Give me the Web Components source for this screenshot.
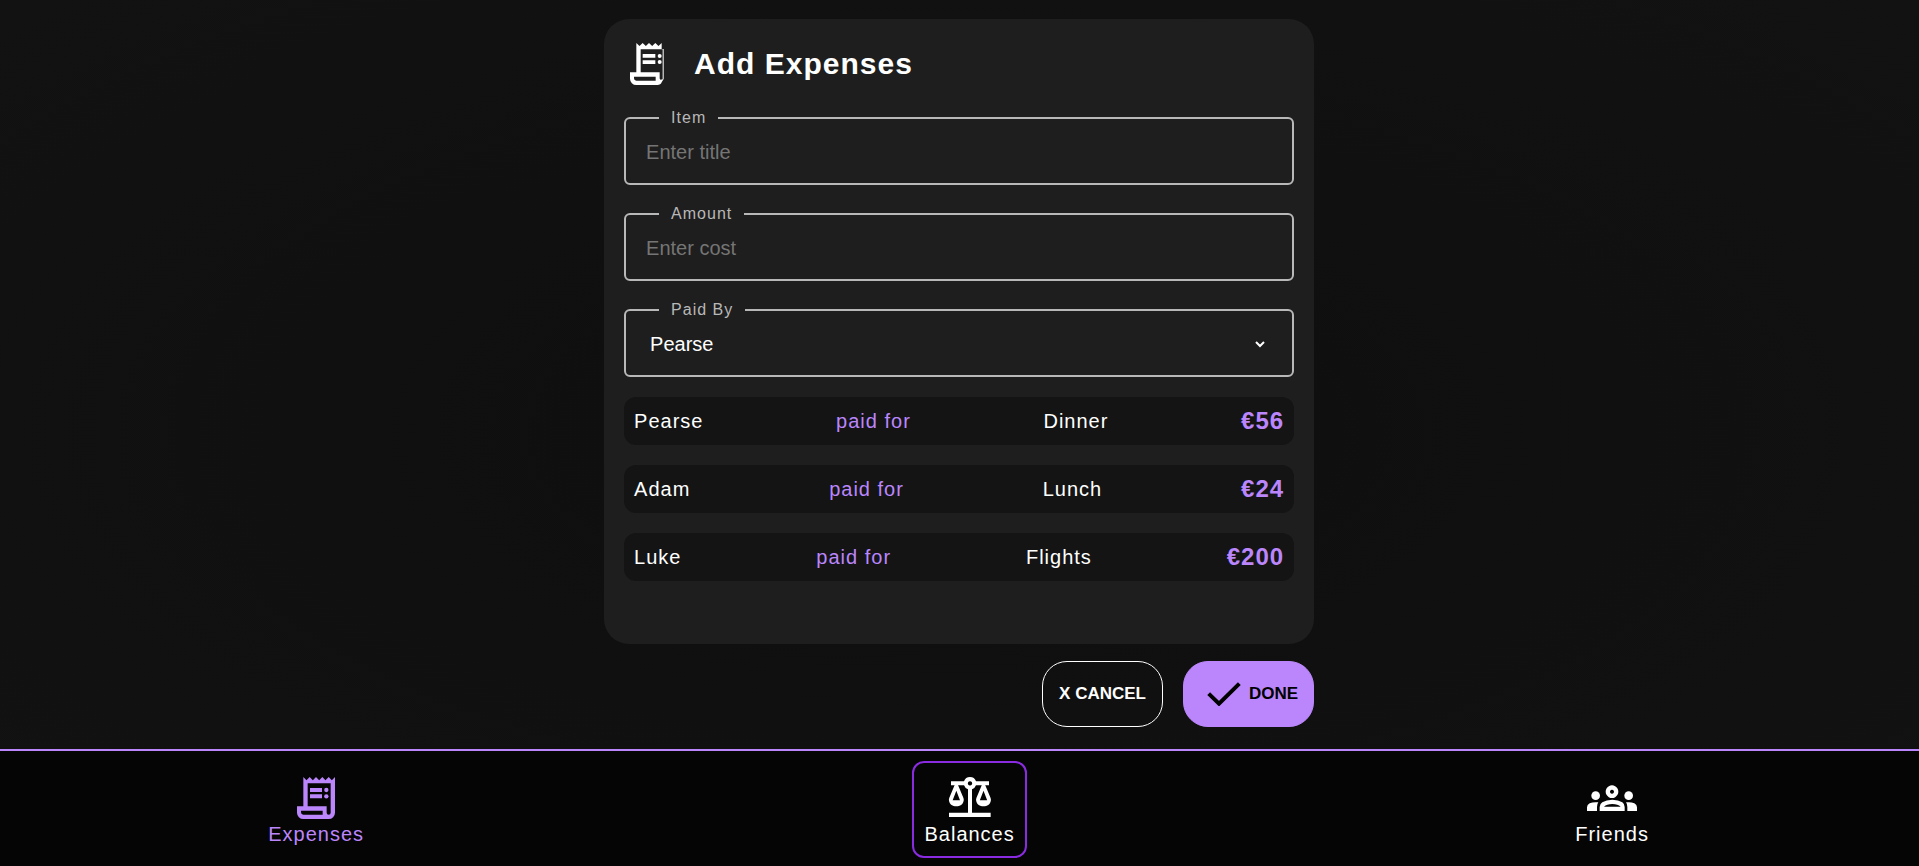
<!DOCTYPE html>
<html lang="en">
<head>
<meta charset="utf-8">
<meta name="viewport" content="width=device-width, initial-scale=1">
<title>Add Expenses</title>
<style>
  body {
    margin: 0;
    background: radial-gradient(ellipse at center, #0f0f0f 20%, #121212);
    color: #fff;
    font: 20px/23px "Liberation Sans", Arial, sans-serif;
    letter-spacing: 1px;
    --accent: #bb86fc;
    --surface: #1e1e1e;
    --row: #141414;
    --line: #b8b8b8;
  }
</style>
</head>
<body>
<expense-app></expense-app>

<script>
const define = (name, html, setup) => customElements.define(name, class extends HTMLElement {
  constructor() {
    super();
    const t = document.createElement('template');
    t.innerHTML = html;
    this.attachShadow({ mode: 'open' }).append(t.content.cloneNode(true));
  }
  connectedCallback() { if (setup) setup(this, this.shadowRoot); }
});

const icons = {
  receipt: `<svg viewBox="0 0 150 150" fill="currentColor"><g transform="translate(18 12)"><path fill-rule="evenodd" d="M19 0l9.5 9.5L38 0l9.5 9.5L57 0l9.5 9.5L76 0l9.5 9.5L95 0l9.5 9.5L114 0V107a19 19 0 0 1-19 19H19a19 19 0 0 1-19-19V88H19ZM32 19H101V107a6 6 0 0 1-12 0V88H32ZM12 101H77V113H19a7 7 0 0 1-7-7Z"/><path d="M39 33h36v12H39zM39 52h36v12H39z"/><circle cx="88" cy="39" r="6.5"/><circle cx="88" cy="58" r="6.5"/></g></svg>`,
  balance: `<svg viewBox="0 0 150 150" fill="currentColor"><path fill-rule="evenodd" d="M18 25H57a19 19 0 0 1 36 0H132V37H93a19 19 0 0 1-12 12V119H137V132H12V119H69V49A19 19 0 0 1 57 37H18ZM75 24.500a6.500 6.500 0 1 0 .01 0Z"/><path fill-rule="evenodd" d="M29 36H39L55 74Q57 79 56 83C54 94 45 100 34 100S14 94 12 83Q11 79 13 74ZM34 53L23 82H45Z"/><path transform="translate(81.500 0)" fill-rule="evenodd" d="M29 36H39L55 74Q57 79 56 83C54 94 45 100 34 100S14 94 12 83Q11 79 13 74ZM34 53L23 82H45Z"/></svg>`,
  friends: `<svg viewBox="0 0 150 150" fill="currentColor"><path fill-rule="evenodd" d="M75 37a19 19 0 1 0 .01 0ZM75 50a6 6 0 1 1-.01 0Z"/><circle cx="26" cy="68" r="13"/><circle cx="125" cy="68" r="13"/><path fill-rule="evenodd" d="M38 114V102Q38 93 46 88Q58 80 76 80T106 88Q113 93 113 102V114ZM51 101H101Q93 93 76 93T51 101Z"/><path d="M0 114V103Q0 95 8 91Q19 86 34 88Q30 93 30 102V114ZM150 114V103Q150 95 142 91Q132 86 117 88Q121 93 121 102V114Z"/></svg>`
};

define('app-heading', `
  <style>
    :host { display: flex; align-items: center; gap: 30px; }
    svg { display: block; width: 40px; height: 50px; flex: none; }
    h1 { margin: 0; font-size: 30px; line-height: 34px; font-weight: 700; }
  </style>
  <svg viewBox="0 0 120 150" fill="#fff"><g transform="translate(18 12)"><path fill-rule="evenodd" d="M19 0l9.500 9L38 0l9.500 9L57 0l9.500 9L76 0l9.500 9L95 0V18H101V108L95 118Q92 126 82 126H19a19 19 0 0 1-19-19V88H19ZM32 19H98V109L92 110Q89 110 89 106V88H32ZM12 101H77V113H19a7 7 0 0 1-7-7Z"/><path d="M38 33h38v11H38zM38 52h38v11H38z"/><circle cx="89" cy="39" r="6"/><circle cx="89" cy="57" r="6"/></g></svg>
  <h1><slot></slot></h1>`);

const fieldStyle = `
    :host { display: block; }
    fieldset { margin: 0; padding: 0; min-width: 0; border: 2px solid var(--line); border-radius: 6px; }
    legend { margin-left: 33px; padding: 0 12px; font-size: 16px; line-height: 18px; color: var(--line); }
    input, select {
      display: block; box-sizing: border-box; width: 100%; height: 50px; margin: 0 0 6px;
      border: 0; outline: 0; background: transparent; color: #fff; font: inherit; letter-spacing: 0;
    }
    input { padding: 0 20px; }
    input::placeholder { color: #757575; opacity: 1; }
    select { width: calc(100% - 44px); margin-left: 20px; padding: 0; }
    option { background: #1e1e1e; }`;

define('text-field', `
  <style>${fieldStyle}</style>
  <fieldset><legend><label for="control"></label></legend><input id="control" type="text"></fieldset>`,
  (host, root) => {
    root.querySelector('label').textContent = host.getAttribute('label');
    root.querySelector('input').placeholder = host.getAttribute('hint');
  });

define('payer-field', `
  <style>${fieldStyle}</style>
  <fieldset><legend><label for="control">Paid By</label></legend>
  <select id="control"><option>Pearse</option><option>Adam</option><option>Luke</option></select></fieldset>`);

define('expense-row', `
  <style>
    :host { display: flex; align-items: center; justify-content: space-between; height: 48px;
      padding: 0 10px; border-radius: 12px; background: var(--row); box-sizing: border-box; }
    .verb { color: var(--accent); }
    strong { color: var(--accent); font-size: 24px; line-height: 28px; }
  </style>
  <span><slot name="who"></slot></span><span class="verb">paid for</span>
  <span><slot name="what"></slot></span><strong><slot name="sum"></slot></strong>`);

define('expense-card', `
  <style>
    :host { display: flex; flex-direction: column; gap: 20px; padding: 20px; border-radius: 25px; background: var(--surface); }
  </style>
  <slot></slot>`);

define('action-button', `
  <style>
    :host { display: block; }
    button { display: flex; align-items: center; gap: 8px; height: 66px; padding: 0 16px; border: 1px solid #fff;
      border-radius: 25px; background: transparent; color: #fff; font: 700 17px/20px "Liberation Sans", Arial, sans-serif; letter-spacing: 0; }
    :host([primary]) button { padding: 0 15px 0 23px; border-color: var(--accent); background: var(--accent); color: #000; }
    svg { display: none; width: 34px; height: 24px; }
    :host([primary]) svg { display: block; }
  </style>
  <button type="button"><svg viewBox="0 0 102 72" fill="none" stroke="currentColor" stroke-width="12"><path d="M5 35L36 65L97 5"/></svg><slot></slot></button>`);

define('nav-item', `
  <style>
    :host { display: block; }
    a { display: flex; flex-direction: column; align-items: center; padding: 10px; border: 2px solid transparent;
      border-radius: 12px; color: #fff; text-decoration: none; }
    :host([current]) a { color: var(--accent); }
    :host([focused]) a { border-color: #8a2be2; }
    svg { display: block; width: 50px; height: 50px; }
  </style>
  <a href="#"><span class="icon"></span><slot></slot></a>`,
  (host, root) => { root.querySelector('.icon').innerHTML = icons[host.getAttribute('icon')]; });

define('nav-bar', `
  <style>
    :host { display: block; border-top: 2px solid var(--accent); background: #050505; }
    nav { display: flex; justify-content: space-between; padding: 10px 13.45% 8px 13.35%; }
  </style>
  <nav><slot></slot></nav>`);

define('expense-app', `
  <style>
    :host { display: flex; flex-direction: column; min-height: 100vh; }
    main { display: flex; flex-direction: column; flex: 1; width: 37%; min-width: 400px; margin: 0 auto 0 31.48%; padding: 19px 0 22px; box-sizing: border-box; }
    expense-card { flex: 1; }
    .actions { display: flex; justify-content: flex-end; gap: 20px; margin-top: 17px; }
  </style>
  <main>
    <expense-card>
      <app-heading>Add Expenses</app-heading>
      <text-field label="Item" hint="Enter title"></text-field>
      <text-field label="Amount" hint="Enter cost"></text-field>
      <payer-field></payer-field>
      <expense-row><span slot="who">Pearse</span><span slot="what">Dinner</span><span slot="sum">€56</span></expense-row>
      <expense-row><span slot="who">Adam</span><span slot="what">Lunch</span><span slot="sum">€24</span></expense-row>
      <expense-row><span slot="who">Luke</span><span slot="what">Flights</span><span slot="sum">€200</span></expense-row>
    </expense-card>
    <div class="actions">
      <action-button>X CANCEL</action-button>
      <action-button primary>DONE</action-button>
    </div>
  </main>
  <nav-bar>
    <nav-item icon="receipt" current>Expenses</nav-item>
    <nav-item icon="balance" focused>Balances</nav-item>
    <nav-item icon="friends">Friends</nav-item>
  </nav-bar>`);
</script>
</body>
</html>
